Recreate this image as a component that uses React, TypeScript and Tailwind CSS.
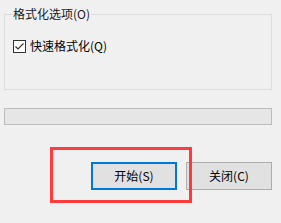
import React from "react";

const font = { fontFamily: '"Noto Sans CJK SC", "Noto Sans", sans-serif' };

export default function App() {
  return (
    <div
      className="relative w-[281px] h-[223px] bg-[#f0f0f0] text-[12px] text-black overflow-hidden"
      style={font}
    >
      <div className="flex flex-col pl-[4px] pt-[14px]">
        <div className="relative w-[268px] h-[76px] border border-[#dcdcdc]">
          <span className="absolute left-[8px] top-[-10px] bg-[#f0f0f0] pr-[1px] leading-[18px] text-[#1a1a1a]">
            格式化选项(O)
          </span>
          <div className="flex items-center gap-[4px] pl-[8px] pt-[22px]">
            <div className="w-[13px] h-[13px] border border-[#333333] bg-white flex items-center justify-center">
              <svg width="11" height="11" viewBox="0 0 11 11">
                <path d="M1.5 5.5 L4 8 L9.5 2.5" fill="none" stroke="#333" strokeWidth="1.2" />
              </svg>
            </div>
            <span className="leading-[18px]">快速格式化(Q)</span>
          </div>
        </div>
        <div className="mt-[18px] w-[268px] h-[17px] border border-[#bcbcbc] bg-[#e6e6e6]" />
        <div className="mt-[37px] w-[268px] flex justify-end gap-[9px]">
          <button className="w-[86px] h-[28px] border-2 border-[#0078d7] bg-[#e1e1e1] flex items-center justify-center leading-none">
            开始(S)
          </button>
          <button className="w-[86px] h-[28px] border border-[#adadad] bg-[#e1e1e1] flex items-center justify-center leading-none">
            关闭(C)
          </button>
        </div>
      </div>
      <div className="absolute left-[50px] top-[147px] w-[142px] h-[56px] border-[3px] border-[#ff3b3b]" />
    </div>
  );
}
